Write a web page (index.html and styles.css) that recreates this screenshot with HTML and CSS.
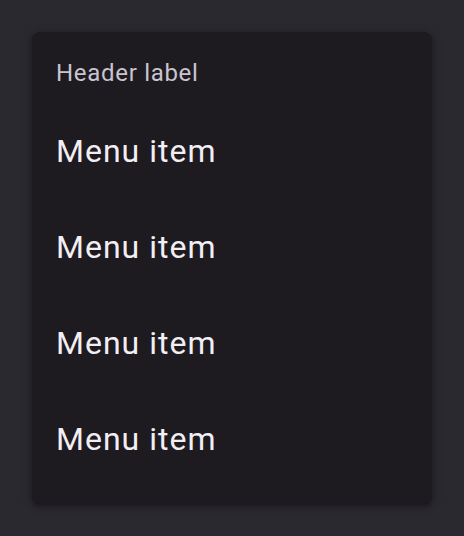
FILE: index.html
```html
<!DOCTYPE html>
<html lang="en">
<head>
    <meta charset="UTF-8" />
    <title>Menu</title>
    <link rel="stylesheet" href="styles.css">
</head>
<body>
    <div class="menu">
        <div class="menu-header">Header label</div>
        <div class="menu-item">Menu item</div>
        <div class="menu-item">Menu item</div>
        <div class="menu-item">Menu item</div>
        <div class="menu-item">Menu item</div>
    </div>
</body>
</html>
```

FILE: styles.css
```css
*,
*::before,
*::after {
    box-sizing: border-box;
}

body {
    margin: 0;
    padding: 32px;
    background: #2b2930;
    font-family: Roboto, 'Noto Sans', sans-serif;
    min-height: 536px;
}

.menu {
    width: 400px;
    padding: 15px 0 17px;
    background: #1d1b20;
    border-radius: 8px;
    box-shadow: 0 2px 4px rgba(0, 0, 0, 0.3), 0 2px 8px 2px rgba(0, 0, 0, 0.15);
}

.menu-header {
    height: 56px;
    padding: 0 24px 4px;
    display: flex;
    align-items: center;
    font-size: 24px;
    letter-spacing: 0.7px;
    color: #cac4d0;
}

.menu-item {
    height: 96px;
    padding: 0 24px;
    display: flex;
    align-items: center;
    font-size: 32px;
    letter-spacing: 1px;
    color: #f2eef4;
}
```
